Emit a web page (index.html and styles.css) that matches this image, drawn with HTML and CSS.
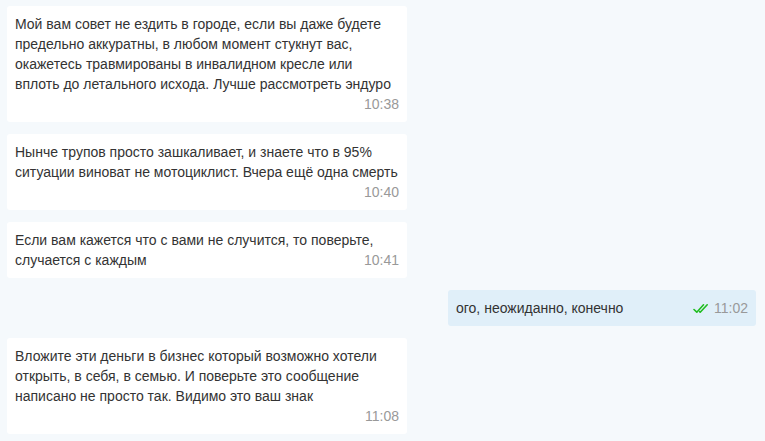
FILE: index.html
```html
<!DOCTYPE html>
<html lang="ru">
<head>
    <meta charset="UTF-8">
    <meta name="viewport" content="width=device-width, initial-scale=1.0">
    <title>Чат</title>
    <link rel="stylesheet" href="styles.css">
</head>
<body>

    <div id="chat">
        <div class="message incoming">
            Мой вам совет не ездить в городе, если вы даже будете предельно аккуратны, в любом момент стукнут вас, окажетесь травмированы в инвалидном кресле или вплоть до летального исхода. Лучше рассмотреть эндуро
            <span class="time">10:38</span>
        </div>

        <div class="message incoming">
            Нынче трупов просто зашкаливает, и знаете что в 95% ситуации виноват не мотоциклист. Вчера ещё одна смерть
            <span class="time">10:40</span>
        </div>

        <div class="message incoming">
            <span>Если вам кажется что с вами не случится, то поверьте,</span><br>
            <span>случается с каждым</span>
            <span class="time">10:41</span>
        </div>

        <div class="message outgoing">
            ого, неожиданно, конечно
            <span class="time">
                <svg class="ticks" width="16" height="11" viewBox="0 0 16 11">
                    <path d="M1 6.5 L3.8 9.2 L10.5 1.8" />
                    <path d="M6.6 8.6 L7.2 9.2 L14.2 1.8" />
                </svg>
                11:02
            </span>
        </div>

        <div class="message incoming">
            Вложите эти деньги в бизнес который возможно хотели открыть, в себя, в семью. И поверьте это сообщение написано не просто так. Видимо это ваш знак
            <span class="time own-line">11:08</span>
        </div>
    </div>

</body>
</html>
```

FILE: styles.css
```css
body {
    font-family: "Liberation Sans", Arial, sans-serif;
    font-size: 14px;
    line-height: 20px;
    color: #333;
    margin: 0;
    padding: 0;
    background-color: #f5f9fc;
}

#chat {
    display: flex;
    flex-direction: column;
    gap: 12px;
    padding: 6px 9px 6px 7px;
}

.message {
    display: flow-root;
    padding: 8px;
    border-radius: 3px;
}

.incoming {
    width: 384px;
    background-color: #fff;
}

.outgoing {
    width: 292px;
    align-self: flex-end;
    background-color: #e0eff9;
}

.time {
    float: right;
    margin-left: 10px;
    color: #999;
    display: flex;
    align-items: center;
    gap: 5px;
}

.time.own-line {
    float: none;
    justify-content: flex-end;
}

.ticks {
    fill: none;
    stroke: #1fbd1f;
    stroke-width: 1.6;
    stroke-linecap: round;
    stroke-linejoin: round;
}
```
